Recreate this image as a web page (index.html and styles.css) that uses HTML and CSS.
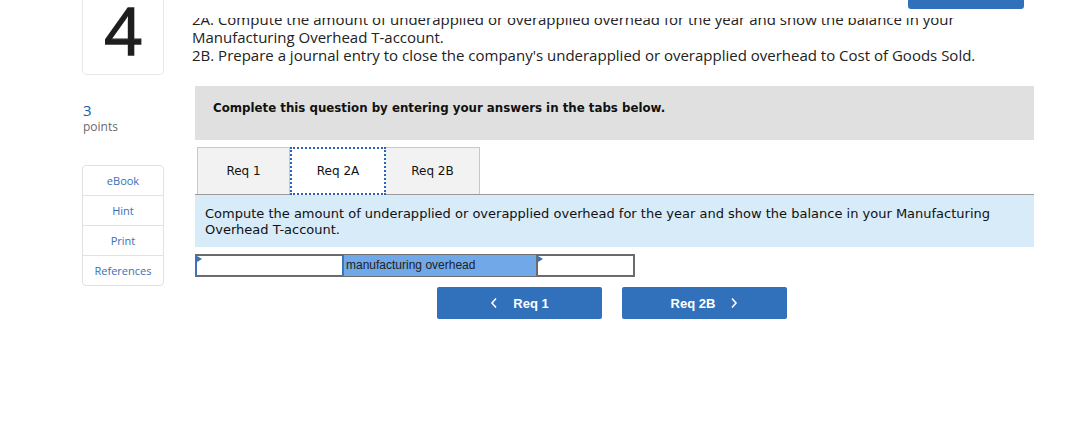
FILE: index.html
```html
<!DOCTYPE html>
<html>
<head>
<meta charset="utf-8">
<link rel="stylesheet" href="styles.css">
</head>
<body>
<div class="topbar"><span class="topbtn"></span></div>
<div class="page">
  <aside class="side">
    <div class="qnum"><span>4</span></div>
    <div class="pts">
      <div class="pts-num">3</div>
      <div class="pts-label">points</div>
    </div>
    <nav class="tools">
      <div class="tool">eBook</div>
      <div class="tool">Hint</div>
      <div class="tool">Print</div>
      <div class="tool">References</div>
    </nav>
  </aside>
  <main class="main">
    <div class="question">
      <div>2A. Compute the amount of underapplied or overapplied overhead for the year and show the balance in your Manufacturing Overhead T-account.</div>
      <div>2B. Prepare a journal entry to close the company's underapplied or overapplied overhead to Cost of Goods Sold.</div>
    </div>
    <div class="instr">Complete this question by entering your answers in the tabs below.</div>
    <div class="tabs">
      <div class="tab t1">Req 1</div>
      <div class="tab t2 active">Req 2A</div>
      <div class="tab t3">Req 2B</div>
    </div>
    <div class="info">Compute the amount of underapplied or overapplied overhead for the year and show the balance in your Manufacturing Overhead T-account.</div>
    <div class="trow">
      <div class="cell in w1"><span class="tri"></span></div>
      <div class="cell label">manufacturing overhead</div>
      <div class="cell in w2"><span class="tri"></span></div>
    </div>
    <div class="navbtns">
      <button class="nbtn"><svg width="8" height="12" viewBox="0 0 8 12"><polyline points="6,1.5 2,6 6,10.5" fill="none" stroke="#fff" stroke-width="1.6"/></svg><span>Req 1</span></button>
      <button class="nbtn"><span>Req 2B</span><svg width="8" height="12" viewBox="0 0 8 12"><polyline points="2,1.5 6,6 2,10.5" fill="none" stroke="#fff" stroke-width="1.6"/></svg></button>
    </div>
  </main>
</div>
</body>
</html>
```

FILE: styles.css
```css
html, body {
  margin: 0;
  padding: 0;
  background: #fff;
}
body {
  font-family: "Open Sans", "Liberation Sans", sans-serif;
  color: #222;
}
.topbar {
  position: fixed;
  top: 0;
  left: 180px;
  right: 0;
  height: 18px;
  background: #fff;
  z-index: 2;
}
.topbtn {
  position: absolute;
  left: 728px;
  top: 0;
  width: 116px;
  height: 9px;
  background: #3171bc;
  border-radius: 0 0 3px 3px;
}
.page {
  display: flex;
  padding-left: 82px;
}
.side {
  width: 82px;
  flex: none;
}
.qnum {
  height: 74px;
  border: 1px solid #e6e6e6;
  border-top: none;
  border-radius: 0 0 5px 5px;
  box-sizing: content-box;
  width: 80px;
  font-family: "Open Sans", sans-serif;
  font-size: 66px;
  line-height: 58px;
  text-align: center;
  color: #1e1e1e;
  -webkit-text-stroke: 1.3px #1e1e1e;
}
.pts {
  margin-top: 27px;
  padding-left: 1px;
}
.pts-num {
  color: #1b5ca6;
  font-size: 15px;
  line-height: 17px;
}
.pts-label {
  color: #6a6a6a;
  font-size: 12px;
  line-height: 15px;
}
.tools {
  margin-top: 31px;
  border: 1px solid #e2e2e2;
  border-radius: 4px;
}
.tool {
  height: 29px;
  line-height: 29px;
  text-align: center;
  font-size: 11px;
  color: #3670b8;
  border-top: 1px solid #e2e2e2;
}
.tool:first-child {
  border-top: none;
}
.main {
  margin-left: 28px;
  width: 842px;
  flex: none;
}
.question {
  padding-top: 10px;
  height: 64px;
  box-sizing: border-box;
  width: 810px;
  font-size: 15px;
  line-height: 18px;
  color: #222;
}
.instr {
  margin-top: 22px;
  margin-left: 3px;
  width: 839px;
  height: 54px;
  box-sizing: border-box;
  background: #e0e0e0;
  padding: 15px 18px;
  font-family: "DejaVu Sans", Verdana, sans-serif;
  font-weight: bold;
  font-size: 11.8px;
  color: #111;
}
.tabs {
  display: flex;
  margin-top: 7px;
  margin-left: 3px;
  padding-left: 2px;
  width: 837px;
  border-bottom: 1px solid #9a9a9a;
}
.tab {
  height: 47px;
  box-sizing: border-box;
  border: 1px solid #c8c8c8;
  border-bottom: none;
  background: #f2f2f2;
  font-family: "DejaVu Sans", Verdana, sans-serif;
  font-size: 12px;
  color: #111;
  display: flex;
  align-items: center;
  justify-content: center;
  padding-bottom: 1px;
}
.t1 { width: 93px; }
.t2 { width: 96px; }
.t3 { width: 94px; border-left: none; }
.tab.active {
  background: #fff;
  border: 2px dotted #2a62b5;
  height: 48px;
  margin-bottom: -1px;
}
.info {
  margin-left: 3px;
  width: 839px;
  box-sizing: border-box;
  height: 52px;
  background: #d8ebf9;
  padding: 11px 10px;
  font-family: "DejaVu Sans", Verdana, sans-serif;
  font-size: 13px;
  line-height: 16px;
  color: #111;
}
.trow {
  display: flex;
  margin-top: 7px;
  margin-left: 3px;
  height: 23px;
}
.cell {
  box-sizing: border-box;
  height: 23px;
  border: 1px solid #6e6e6e;
  position: relative;
}
.cell.in {
  background: #fff;
  box-shadow: inset 0 0 0 1px #3a70b6;
}
.w1 { width: 149px; }
.w2 { width: 99px; }
.label {
  width: 192px;
  background: #70a8e8;
  border-left: none;
  border-right: none;
  font-family: "Liberation Sans", Arial, sans-serif;
  font-size: 12px;
  line-height: 20px;
  padding-left: 2px;
  color: #222;
}
.tri {
  position: absolute;
  left: 1px;
  top: 1px;
  width: 0;
  height: 0;
  border-left: 5px solid #3a70b6;
  border-top: 3px solid transparent;
  border-bottom: 3px solid transparent;
}
.navbtns {
  display: flex;
  justify-content: center;
  gap: 20px;
  margin-top: 10px;
  width: 840px;
}
.nbtn {
  width: 165px;
  height: 32px;
  border: none;
  border-radius: 2px;
  background: #3171bc;
  color: #fff;
  font-family: "Liberation Sans", Arial, sans-serif;
  font-weight: bold;
  font-size: 13px;
  display: flex;
  align-items: center;
  justify-content: center;
  gap: 15px;
  padding: 0;
}
```
